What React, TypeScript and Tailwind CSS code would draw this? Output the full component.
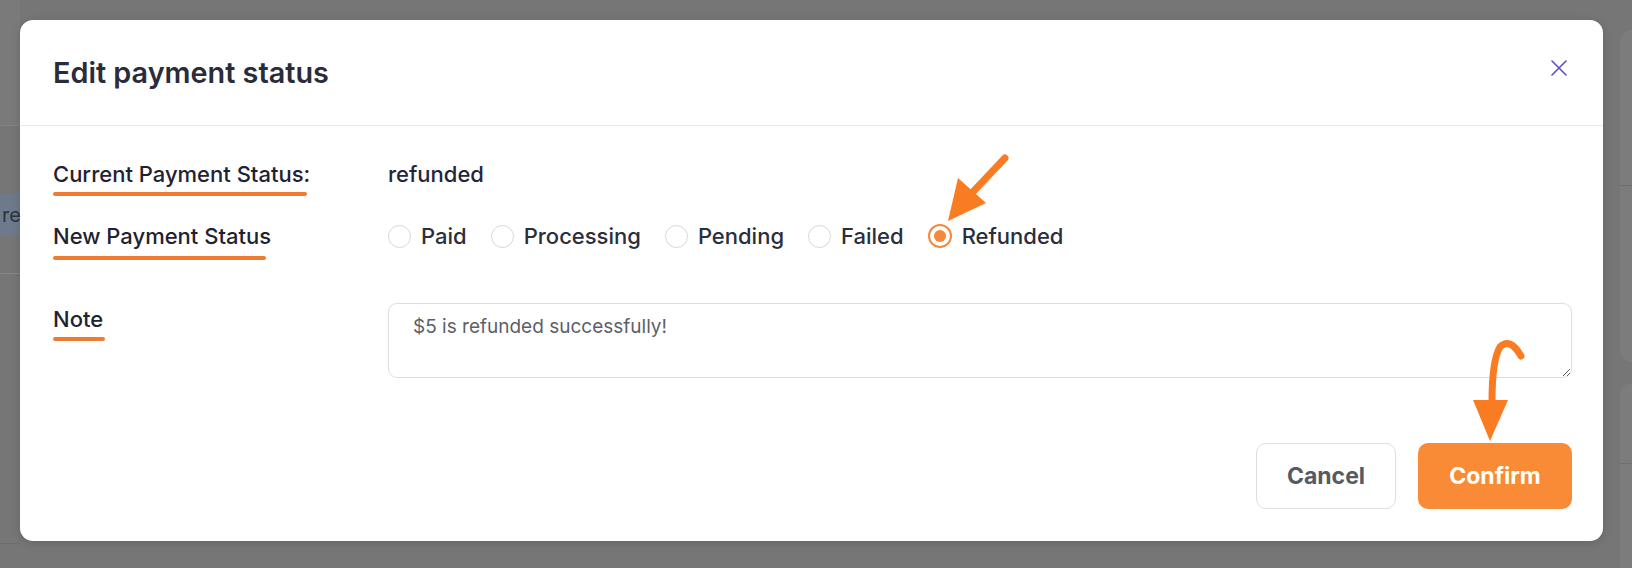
import React from "react";

const statuses = ["Paid", "Processing", "Pending", "Failed", "Refunded"];

function Radio({ label, checked }: { label: string; checked?: boolean }) {
  return (
    <label className="flex items-center gap-[10px]">
      {checked ? (
        <span className="flex h-[24px] w-[24px] items-center justify-center rounded-full border-2 border-[#f6883d] bg-white">
          <span className="h-[12px] w-[12px] rounded-full bg-[#f6883d]" />
        </span>
      ) : (
        <span className="h-[23px] w-[23px] rounded-full border border-[#d6d8dd] bg-white" />
      )}
      <span className="text-[22px] font-medium leading-[30px] text-[#2b2e3b]">{label}</span>
    </label>
  );
}

function Label({ text, line, top }: { text: string; line: number; top: number }) {
  return (
    <div className="w-[335px] shrink-0">
      <span className="relative inline-block text-[22px] font-medium leading-[30px] text-[#1f2231]">
        {text}
        {/* hand-drawn annotation underline */}
        <span
          className="absolute left-0 h-[4px] rounded-full bg-[#ec7d30]"
          style={{ width: line, top }}
        />
      </span>
    </div>
  );
}

export default function App() {
  return (
    <div
      className="relative h-[568px] w-[1632px] overflow-hidden bg-[#767676]"
      style={{ fontFamily: "Inter, 'Noto Sans', sans-serif" }}
    >
      {/* dimmed page behind the dialog */}
      <div className="flex h-full justify-between">
        <div className="flex w-[20px] flex-col">
          <div className="h-[126px] border-b border-[#828282] bg-[#7a7a7a]" />
          <div className="mt-[68px] flex h-[42px] items-center overflow-hidden bg-[#6d7a8b] pl-[2px] text-[20px] text-[#2c3440]">
            ref
          </div>
          <div className="mt-[37px] border-b border-[#858585]" />
          <div className="mt-auto mb-[24px] border-b border-[#6e6e6e]" />
        </div>
        <div className="flex w-[20px] flex-col pt-[30px]">
          <div className="ml-[8px] h-[332px] rounded-tl-[12px] rounded-bl-[12px] bg-[#7c7c7c]">
            <div className="mt-[155px] border-b border-[#6f6f6f]" />
          </div>
          <div className="ml-[8px] mt-[21px] flex-1 rounded-tl-[12px] bg-[#7c7c7c]">
            <div className="mt-[80px] border-b border-[#6f6f6f]" />
          </div>
        </div>
      </div>

      {/* dialog */}
      <div className="absolute left-[20px] top-[20px] w-[1583px] rounded-[13px] bg-white shadow-[0_2px_10px_rgba(0,0,0,0.15)]">
        <div className="flex h-[106px] items-center justify-between border-b border-[#e8e9ec] pl-[33px] pr-[35px]">
          <h2 className="text-[28.8px] font-semibold leading-[36px] text-[#2a2c3c]">Edit payment status</h2>
          <button aria-label="Close" className="mb-[10px] flex h-[18px] w-[18px] items-center justify-center">
            <svg width="16" height="16" viewBox="0 0 16 16" fill="none">
              <path d="M1 1L15 15M15 1L1 15" stroke="#5b4fd3" strokeWidth="1.6" strokeLinecap="round" />
            </svg>
          </button>
        </div>

        <div className="pb-[32px] pl-[33px] pr-[31px] pt-[33px]">
          <div className="flex h-[30px] items-center">
            <Label text="Current Payment Status:" line={254} top={33} />
            <span className="text-[22px] font-medium leading-[30px] text-[#23263a]">refunded</span>
          </div>

          <div className="mt-[32px] flex h-[30px] items-center">
            <Label text="New Payment Status" line={213} top={35} />
            <div className="flex items-center gap-[24px]">
              {statuses.map((s) => (
                <Radio key={s} label={s} checked={s === "Refunded"} />
              ))}
            </div>
          </div>

          <div className="mt-[52px] flex items-start">
            <div className="mt-[1px]">
              <Label text="Note" line={52} top={33} />
            </div>
            <textarea
              defaultValue="$5 is refunded successfully!"
              className="h-[75px] flex-1 rounded-[9px] border border-[#dcdee3] px-[24px] pt-[9px] text-[19px] leading-[27px] text-[#5c5f67] outline-none"
            />
          </div>

          <div className="mt-[65px] flex justify-end gap-[22px]">
            <button className="h-[66px] w-[140px] rounded-[10px] border border-[#dcdee3] bg-white text-[23px] font-bold text-[#565a62]">
              Cancel
            </button>
            <button className="h-[66px] w-[154px] rounded-[10px] bg-[#f98b37] text-[23px] font-bold text-white">
              Confirm
            </button>
          </div>
        </div>
      </div>

      {/* annotation arrows */}
      <svg className="pointer-events-none absolute left-0 top-0" width="1632" height="568" viewBox="0 0 1632 568">
        <line x1="1005" y1="158" x2="970" y2="195" stroke="#f97c22" strokeWidth="7" strokeLinecap="round" />
        <polygon points="958,178 986,203 948,221" fill="#f97c22" />
        <path
          d="M1521 356 Q1510 337 1500 347 Q1492 360 1492 402"
          stroke="#f97c22"
          strokeWidth="7"
          strokeLinecap="round"
          fill="none"
        />
        <polygon points="1473,400 1508,400 1490,441" fill="#f97c22" />
      </svg>
    </div>
  );
}
